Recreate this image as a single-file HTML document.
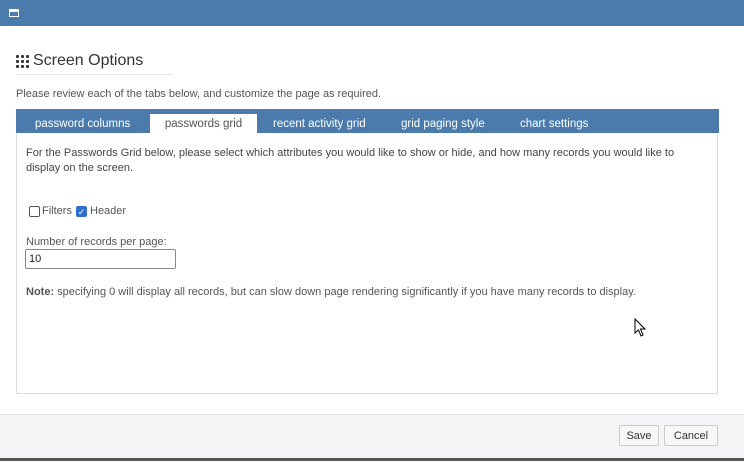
<!DOCTYPE html>
<html><head><style>
body{margin:0;width:744px;height:461px;overflow:hidden;background:#fff;font-family:"Liberation Sans",sans-serif;font-size:11px;color:#333;position:relative}
.top{position:absolute;left:0;top:0;width:744px;height:26px;background:#4a7bac}
.win{position:absolute;left:9px;top:9px;width:10px;height:8px;border:1px solid #fff;border-top-width:3px;box-sizing:border-box}
h1{position:absolute;left:16px;top:52px;margin:0;font-weight:normal;font-size:16px;color:#333;display:flex;align-items:center}
.dots{display:inline-grid;grid-template-columns:repeat(3,3px);gap:2px;margin-right:4px}
.dots i{width:3px;height:3px;background:#333;border-radius:1px}
.hr{position:absolute;left:16px;top:74px;width:156px;height:1px;background:#e6e6e6}
.intro{position:absolute;left:16px;top:88px;color:#555}
.tabs{position:absolute;left:16px;top:109px;width:703px;height:24px;background:#4a7bac}
.tab{position:absolute;top:9px;color:#fff;font-size:11.5px}
.tab.a{top:5px;background:#fff;color:#555;height:19px;line-height:21px}
.panel{position:absolute;left:16px;top:133px;width:700px;height:260px;border:1px solid #ddd;border-top:none}
.footer{position:absolute;left:0;top:414px;width:744px;height:44px;background:#f3f4f6;border-top:1px solid #e3e3e3}
.bot{position:absolute;left:0;top:458px;width:744px;height:3px;background:#555}
.btn{position:absolute;top:425px;height:19px;border:1px solid #ccc;background:#f7f7f7;border-radius:2px;line-height:21px;text-align:center;color:#333}
.cb{position:absolute;top:1px;width:11px;height:11px;border:1px solid #555;border-radius:2px;box-sizing:border-box}
</style></head><body>
<div class="top"><div class="win"></div></div>
<h1><span class="dots"><i></i><i></i><i></i><i></i><i></i><i></i><i></i><i></i><i></i></span>Screen Options</h1>
<div class="hr"></div>
<div class="intro">Please review each of the tabs below, and customize the page as required.</div>
<div class="tabs">
<span class="tab" style="left:19px">password columns</span>
<span class="tab a" style="left:134px;width:107px;text-align:center">passwords grid</span>
<span class="tab" style="left:257px">recent activity grid</span>
<span class="tab" style="left:385px">grid paging style</span>
<span class="tab" style="left:504px">chart settings</span>
</div>
<div class="panel"></div>
<div style="position:absolute;left:26px;top:146px;width:680px;line-height:15px;color:#444">For the Passwords Grid below, please select which attributes you would like to show or hide, and how many records you would like to display on the screen.</div>
<div style="position:absolute;left:29px;top:205px;width:120px;height:14px;color:#555">
<span class="cb" style="left:0"></span><span style="position:absolute;left:13px;top:0">Filters</span>
<span class="cb" style="left:47px;background:#2f6fd0;border-color:#2f6fd0;color:#fff;font-size:9px;line-height:10px;text-align:center">✓</span><span style="position:absolute;left:61px;top:0">Header</span></div>
<div style="position:absolute;left:26px;top:236px;color:#555">Number of records per page:</div>
<div style="position:absolute;left:25px;top:249px;width:146px;height:18px;border:1px solid #888;border-radius:2px;line-height:19px;padding-left:3px;color:#222">10</div>
<div style="position:absolute;left:26px;top:286px;color:#555"><b>Note:</b> specifying 0 will display all records, but can slow down page rendering significantly if you have many records to display.</div>
<svg style="position:absolute;left:634px;top:318px" width="14" height="20"><path d="M1 1 L1 15 L4.5 12 L7 18 L9 17 L6.5 11 L11 11 Z" fill="#fff" stroke="#000" stroke-width="1"/></svg>
<div class="footer"></div>
<div class="btn" style="left:619px;width:38px">Save</div>
<div class="btn" style="left:664px;width:52px">Cancel</div>
<div class="bot"></div>
</body></html>
